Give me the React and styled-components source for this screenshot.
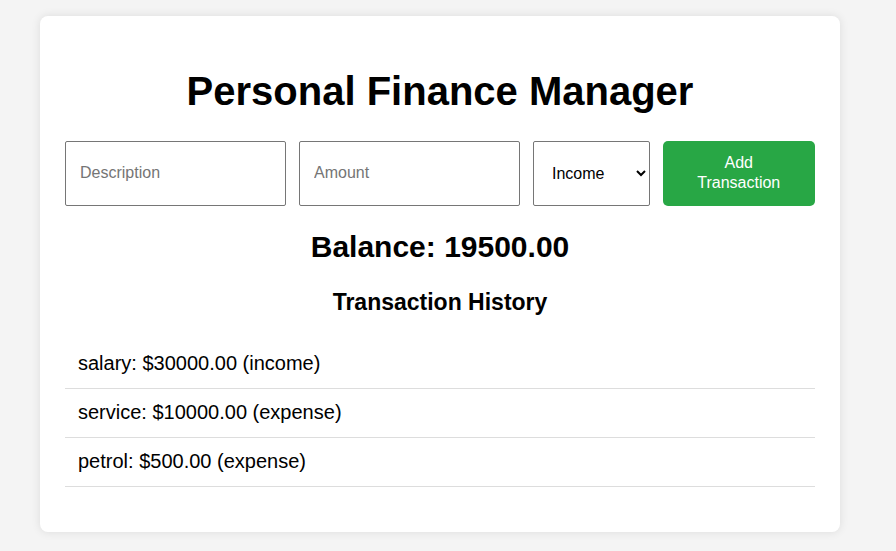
import React, { useState } from 'react';
import styled, { createGlobalStyle } from 'styled-components';

const GlobalStyle = createGlobalStyle`
  body {
    margin: 0;
    padding: 16px 40px;
    background: #f4f4f4;
    font-family: "Liberation Sans", Arial, sans-serif;
    color: #000;
  }
`;

const Card = styled.div`
  width: 800px;
  box-sizing: border-box;
  background: #fff;
  border-radius: 8px;
  padding: 25px 25px 45px;
  box-shadow: 0 0 10px rgba(0, 0, 0, 0.1);
`;

const Title = styled.h1`
  font-size: 40px;
  font-weight: 700;
  text-align: center;
  margin: 27px 0;
  line-height: 46px;
`;

const Form = styled.div`
  display: flex;
  gap: 13px;
  height: 65px;
`;

const Field = styled.input`
  width: 221px;
  box-sizing: border-box;
  border: 1px solid #767676;
  border-radius: 2px;
  padding: 0 14px 2px;
  font-family: inherit;
  font-size: 16px;
  color: #000;
  outline: none;

  &::placeholder {
    color: #757575;
  }
`;

const Select = styled.select`
  width: 117px;
  box-sizing: border-box;
  border: 1px solid #767676;
  border-radius: 2px;
  padding: 0 8px 0 14px;
  font-family: inherit;
  font-size: 16px;
  background: #fff;
  color: #000;
`;

const AddButton = styled.button`
  width: 153px;
  border: none;
  border-radius: 5px;
  background: #28a745;
  color: #fff;
  font-family: inherit;
  font-size: 16px;
  line-height: 20px;
  padding: 0 20px 2px;
  cursor: pointer;
`;

const Balance = styled.h2`
  font-size: 30px;
  font-weight: 700;
  text-align: center;
  margin: 24px 0 0;
  line-height: 34px;
`;

const SubTitle = styled.h3`
  font-size: 23px;
  font-weight: 700;
  text-align: center;
  margin: 25px 0 0;
  line-height: 26px;
`;

const List = styled.ul`
  list-style: none;
  margin: 25px 0 0;
  padding: 0;
`;

const Item = styled.li`
  font-size: 20px;
  line-height: 24px;
  padding: 11px 13px 13px;
  border-bottom: 1px solid #ddd;
`;

const transactions = [
  { desc: 'salary', amount: 30000, type: 'income' },
  { desc: 'service', amount: 10000, type: 'expense' },
  { desc: 'petrol', amount: 500, type: 'expense' },
];

export default function App() {
  const [type, setType] = useState('income');
  const balance = transactions.reduce(
    (sum, t) => (t.type === 'income' ? sum + t.amount : sum - t.amount),
    0
  );

  return (
    <>
      <GlobalStyle />
      <Card>
        <Title>Personal Finance Manager</Title>
        <Form>
          <Field type="text" placeholder="Description" />
          <Field type="number" placeholder="Amount" />
          <Select value={type} onChange={(e) => setType(e.target.value)}>
            <option value="income">Income</option>
            <option value="expense">Expense</option>
          </Select>
          <AddButton>Add Transaction</AddButton>
        </Form>
        <Balance>Balance: {balance.toFixed(2)}</Balance>
        <SubTitle>Transaction History</SubTitle>
        <List>
          {transactions.map((t, i) => (
            <Item key={i}>
              {t.desc}: ${t.amount.toFixed(2)} ({t.type})
            </Item>
          ))}
        </List>
      </Card>
    </>
  );
}
